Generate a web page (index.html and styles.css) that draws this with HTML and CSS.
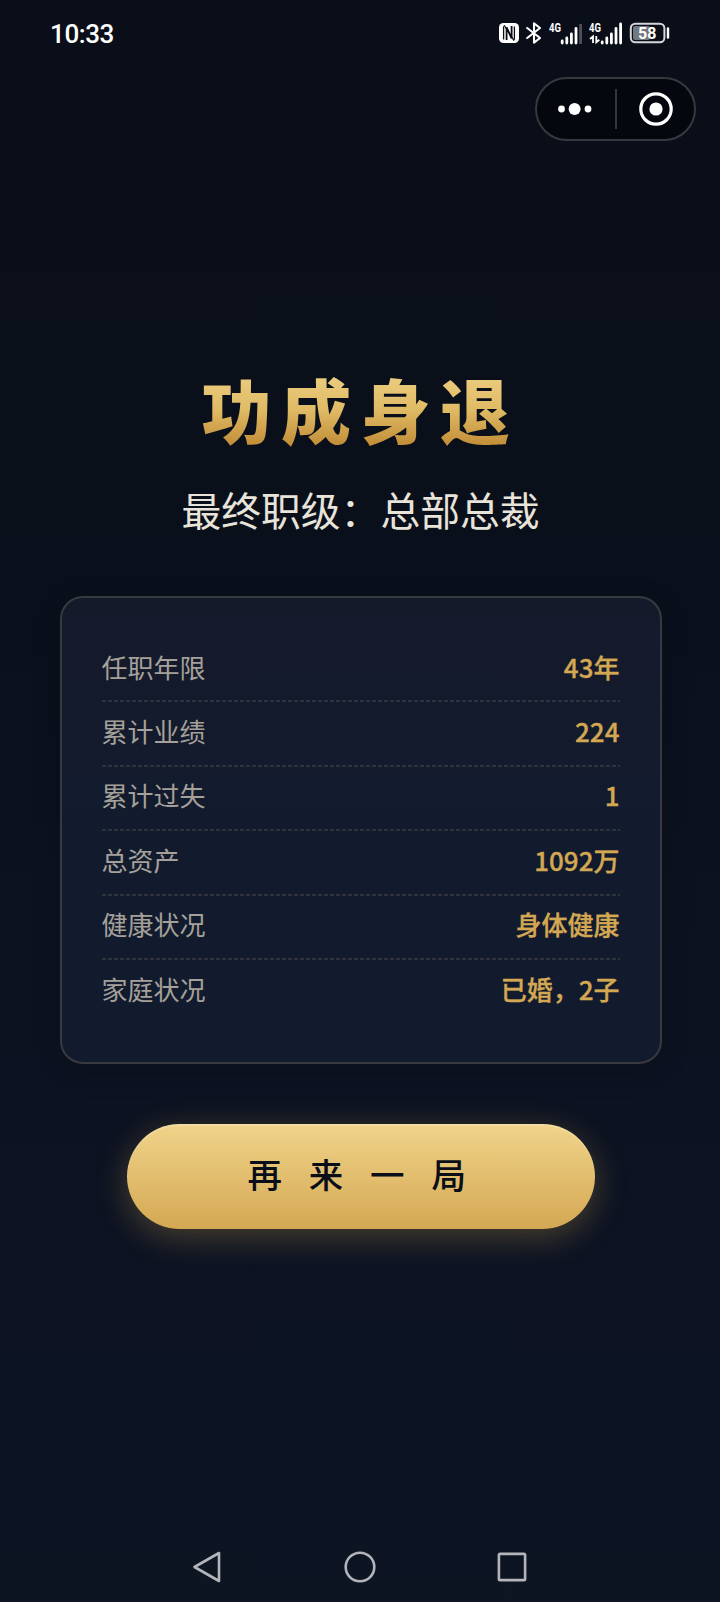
FILE: index.html
```html
<!DOCTYPE html>
<html lang="zh-CN">
<head>
<meta charset="utf-8">
<title>功成身退</title>
<link rel="stylesheet" href="styles.css">
</head>
<body>
<div class="screen">
  <header class="status-bar">
    <time class="clock">10:33</time>
    <div class="indicators">
      <svg class="nfc" width="20" height="20" viewBox="0 0 20 20">
        <rect width="20" height="20" rx="4.5" fill="#fff"/>
        <path d="M4.6 3.2v13.4M15.4 3.4v13.4" stroke="#0a0d17" stroke-width="1.3"/>
        <path d="M7.6 17V4.4l5 11V3" fill="none" stroke="#0a0d17" stroke-width="1.8"/>
        <path d="M5.2 2.2 15 17.6" stroke="#0a0d17" stroke-width="1.2"/>
      </svg>
      <svg class="bluetooth" width="16" height="22" viewBox="0 0 16 22">
        <path d="M1.2 6 14 16l-6 4.7V1.3L14 6 1.2 16" fill="none" stroke="#fff" stroke-width="2.1" stroke-linejoin="round" stroke-linecap="round"/>
      </svg>
      <svg class="signal" width="36" height="30" viewBox="-2 -4 36 30">
        <text class="network" x="0" y="10" textLength="12" lengthAdjust="spacingAndGlyphs">4G</text>
        <path d="M13.2 19v2M17.8 16v5M22.4 12v9M27 6.5V21" stroke="#fff" stroke-width="2.8" stroke-linecap="round"/>
        <path d="M31.6 2v20" stroke="#4d5059" stroke-width="2.8"/>
      </svg>
      <svg class="signal" width="36" height="30" viewBox="-2 -4 36 30">
        <text class="network" x="0" y="10" textLength="12" lengthAdjust="spacingAndGlyphs">4G</text>
        <path d="M4 21v-6.5L1 17M7.3 14v6.3l3-2.6" fill="none" stroke="#fff" stroke-width="1.8"/>
        <path d="M13.2 20v1M17.8 16v5M22.4 12v9M27 6.5V21M31.6 2v19" stroke="#fff" stroke-width="2.8" stroke-linecap="round"/>
      </svg>
      <svg class="battery" width="42" height="22" viewBox="0 0 42 22">
        <rect x="4" y="4" width="17" height="14" rx="2" fill="#74777e"/>
        <rect x="1.8" y="1.7" width="33.6" height="18.6" rx="4.5" fill="none" stroke="#d5d6d9" stroke-width="2"/>
        <path d="M39 6.5v9" stroke="#fff" stroke-width="2.4" stroke-linecap="round"/>
        <text class="charge" x="18.2" y="16.9" text-anchor="middle">58</text>
      </svg>
    </div>
  </header>

  <div class="capsule-row">
    <div class="capsule">
      <svg width="34" height="14" viewBox="0 0 34 14" fill="#fff">
        <circle cx="3.5" cy="7" r="3.4"/><circle cx="16.6" cy="7" r="6"/><circle cx="30" cy="7" r="3.4"/>
      </svg>
      <span class="capsule-divider"></span>
      <svg width="34" height="34" viewBox="0 0 34 34">
        <circle cx="17" cy="17" r="15.2" fill="none" stroke="#fff" stroke-width="3.2"/>
        <circle cx="17" cy="17" r="6.6" fill="#fff"/>
      </svg>
    </div>
  </div>

  <main class="result">
    <h1 class="title">功成身退</h1>
    <p class="rank">最终职级：总部总裁</p>
    <dl class="stats">
      <div class="stat"><dt>任职年限</dt><dd>43年</dd></div>
      <div class="stat"><dt>累计业绩</dt><dd>224</dd></div>
      <div class="stat"><dt>累计过失</dt><dd>1</dd></div>
      <div class="stat"><dt>总资产</dt><dd>1092万</dd></div>
      <div class="stat"><dt>健康状况</dt><dd>身体健康</dd></div>
      <div class="stat"><dt>家庭状况</dt><dd>已婚，2子</dd></div>
    </dl>
    <button class="restart" type="button">再 来 一 局</button>
  </main>

  <nav class="system-nav">
    <svg width="32" height="34" viewBox="0 0 32 34"><path d="M27 3v28L2.5 17z"/></svg>
    <svg width="34" height="34" viewBox="0 0 34 34"><circle cx="17" cy="17" r="14.3"/></svg>
    <svg width="32" height="34" viewBox="0 0 32 34"><rect x="2.9" y="3.9" width="26.2" height="26.2" rx="1.2"/></svg>
  </nav>
</div>
</body>
</html>
```
FILE: styles.css
```css
* {
  box-sizing: border-box;
}

body {
  margin: 0;
  font-family: "Noto Sans CJK SC", sans-serif;
  background: #0a0e18;
}

.screen {
  display: flex;
  flex-direction: column;
  width: 720px;
  height: 1602px;
  overflow: hidden;
  background: linear-gradient(180deg, #0a0e18 0%, #0a101b 35%, #0d1322 75%, #0d1422 100%);
}

.status-bar {
  display: flex;
  align-items: center;
  justify-content: space-between;
  height: 66px;
  padding: 0 49px 0 50px;
}

.clock {
  padding-top: 2px;
  color: #fff;
  font: 500 26px/30px Roboto, sans-serif;
  letter-spacing: -0.4px;
}

.indicators {
  display: flex;
  align-items: center;
}

.bluetooth { margin-left: 7px; }
.signal { margin-left: 4.5px; }
.network { fill: #fff; font: 700 12px Roboto, sans-serif; }
.battery { margin-left: 6px; }
.charge { fill: #fff; font: 700 16px Roboto, sans-serif; }

.capsule-row {
  display: flex;
  justify-content: flex-end;
  padding: 11px 24px 0 0;
}

.capsule {
  display: flex;
  align-items: center;
  width: 161px;
  height: 64px;
  padding: 0 21px;
  justify-content: space-between;
  border: 2px solid #36393f;
  border-radius: 32px;
  background: #04070d;
}

.capsule-divider {
  width: 2px;
  height: 40px;
  background: #34363d;
}

.result {
  display: flex;
  flex-direction: column;
  align-items: center;
  padding: 219px 0 0 1px;
}

.title {
  margin: 0;
  font-size: 70px;
  font-weight: 900;
  line-height: 98px;
  letter-spacing: 9.5px;
  color: transparent;
  background: linear-gradient(180deg, #f0d48a 0%, #e0bb66 50%, #c4903a 85%);
  -webkit-background-clip: text;
  background-clip: text;
}

.rank {
  margin: 22px 0 0;
  font-size: 39.8px;
  line-height: 58px;
  color: #e8e4da;
}

.stats {
  width: 602px;
  height: 468px;
  margin: 58px 0 0;
  padding: 40px 40px 0;
  border: 2px solid #393a40;
  border-radius: 23px;
  background: linear-gradient(180deg, #151a2b 0%, #121b2e 50%, #121b2e 100%);
  box-shadow: 0 8px 30px rgba(0, 0, 0, 0.15);
}

.stat {
  display: flex;
  align-items: center;
  justify-content: space-between;
  height: 64.4px;
  padding-bottom: 8px;
  background: repeating-linear-gradient(90deg, #2f333e 0 4px, transparent 4px 6px) left bottom / 100% 2px no-repeat;
  font-size: 26px;
}

.stat:last-child {
  background: none;
}

.stat dt {
  color: #a5a19a;
}

.stat dd {
  margin: 0;
  font-weight: 500;
  color: #d4a853;
  -webkit-text-stroke: 0.3px #d4a853;
}

.restart {
  width: 468px;
  height: 105px;
  margin-top: 60px;
  padding: 0 0 8px 2px;
  border: 0;
  border-radius: 53px;
  font-family: inherit;
  font-size: 34.5px;
  font-weight: 500;
  letter-spacing: 9.5px;
  color: #0a0e18;
  background: linear-gradient(180deg, #f0d48a 0%, #d4a853 100%);
  box-shadow: 0 8px 32px rgba(212, 168, 83, 0.3), inset 0 2px 1px rgba(255, 255, 255, 0.2);
}

.system-nav {
  display: flex;
  justify-content: space-between;
  margin-top: auto;
  padding: 0 192px 18px;
}

.system-nav svg {
  fill: none;
  stroke: #b3b5ba;
  stroke-width: 2.6;
  stroke-linejoin: round;
}
```
